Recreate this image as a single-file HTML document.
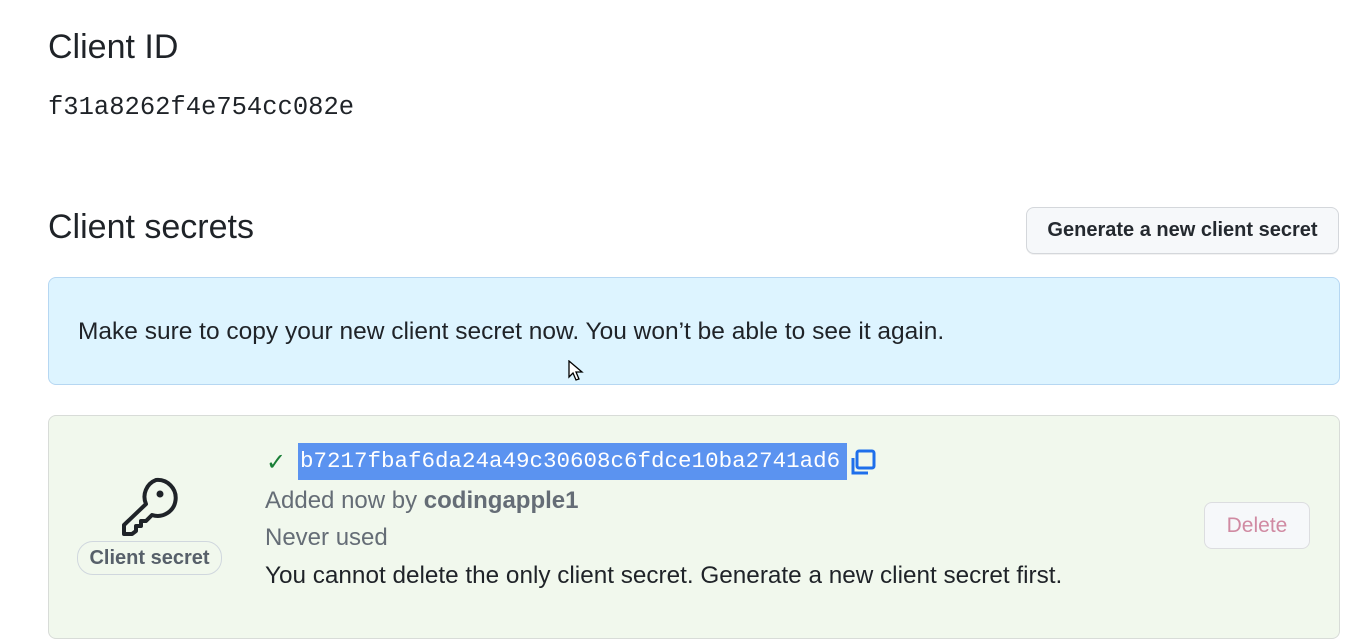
<!DOCTYPE html>
<html><head><meta charset="utf-8"><style>
body{margin:0;width:1358px;height:641px;background:#fff;font-family:"Liberation Sans",sans-serif;color:#1f2328;position:relative;overflow:hidden}
.a{position:absolute;white-space:nowrap}
.mono{font-family:"Liberation Mono",monospace}
</style></head><body>
<div class="a" style="left:48px;top:28px;font-size:34px">Client ID</div>
<div class="a mono" style="left:48px;top:93px;font-size:25.5px">f31a8262f4e754cc082e</div>
<div class="a" style="left:48px;top:208px;font-size:34px">Client secrets</div>
<div class="a" style="left:1026px;top:207px;width:311px;height:45px;border:1px solid #d4d7db;border-radius:8px;background:#f6f8fa;box-shadow:0 1px 0 rgba(0,0,0,.05);font-size:20px;font-weight:bold;text-align:center;line-height:45px;color:#24292f">Generate a new client secret</div>
<div class="a" style="left:48px;top:277px;width:1290px;height:106px;border:1px solid #b6d7f2;border-radius:8px;background:#ddf4ff"></div>
<div class="a" style="left:78px;top:318px;font-size:24.5px">Make sure to copy your new client secret now. You won’t be able to see it again.</div>
<div class="a" style="left:48px;top:415px;width:1290px;height:222px;border:1px solid #d8dcd8;border-radius:8px;background:#f1f8ed"></div>
<svg class="a" style="left:118px;top:476px" width="62" height="60" viewBox="0 0 62 60"><path d="M38 4a18 18 0 1 1-4 35l-6 6h-5v5h-5v5l-4 3H6v-9l22-21A18 18 0 0 1 38 4z" fill="none" stroke="#1f2328" stroke-width="4" stroke-linejoin="round"/><circle cx="42" cy="18" r="3.5" fill="#1f2328"/></svg>
<div class="a" style="left:77px;top:541px;width:143px;height:32px;border:1px solid #d0d7de;border-radius:16px;font-size:20px;font-weight:bold;color:#57606a;text-align:center;line-height:32px">Client secret</div>
<div class="a" style="left:266px;top:448px;font-size:24px;color:#1a7f37">✓</div>
<div class="a mono" style="left:298px;top:443px;width:549px;height:37px;background:#5b93f0;color:#fff;font-size:22.5px;line-height:37px;padding-left:2px;box-sizing:border-box">b7217fbaf6da24a49c30608c6fdce10ba2741ad6</div>
<svg class="a" style="left:848px;top:448px" width="30" height="30" viewBox="0 0 30 30"><rect x="9" y="3" width="17" height="17" rx="2" fill="none" stroke="#1f6feb" stroke-width="3"/><path d="M5 10v15h15" fill="none" stroke="#1f6feb" stroke-width="3"/></svg>
<div class="a" style="left:265px;top:487px;font-size:24px;color:#656d76">Added now by <b>codingapple1</b></div>
<div class="a" style="left:265px;top:524px;font-size:24px;color:#656d76">Never used</div>
<div class="a" style="left:265px;top:562px;font-size:24.3px;color:#1f2328">You cannot delete the only client secret. Generate a new client secret first.</div>
<div class="a" style="left:1204px;top:502px;width:104px;height:45px;border:1px solid #dcdde0;border-radius:8px;background:#f6f8fa;color:#d08aa2;font-size:21px;text-align:center;line-height:45px">Delete</div>
<svg class="a" style="left:568px;top:360px" width="16" height="22" viewBox="0 0 16 22"><path d="M1 1v16l4-4 3 7 3-1-3-7h6z" fill="#fff" stroke="#000" stroke-width="1.3"/></svg>
</body></html>
